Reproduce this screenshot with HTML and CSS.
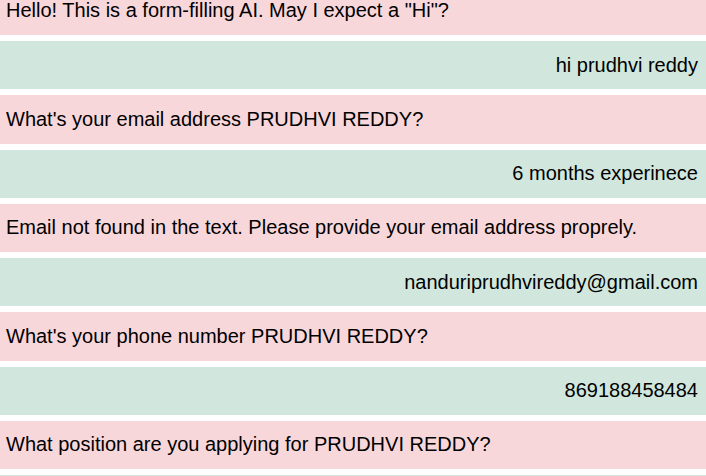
FILE: index.html
```html
<!DOCTYPE html>
<html>
<head>
<meta charset="utf-8">
<link rel="stylesheet" href="styles.css">
</head>
<body>
<div class="chat">
  <div class="msg bot">Hello! This is a form-filling AI. May I expect a "Hi"?</div>
  <div class="msg user">hi prudhvi reddy</div>
  <div class="msg bot">What's your email address PRUDHVI REDDY?</div>
  <div class="msg user">6 months experinece</div>
  <div class="msg bot">Email not found in the text. Please provide your email address proprely.</div>
  <div class="msg user">nanduriprudhvireddy@gmail.com</div>
  <div class="msg bot">What's your phone number PRUDHVI REDDY?</div>
  <div class="msg user">869188458484</div>
  <div class="msg bot">What position are you applying for PRUDHVI REDDY?</div>
  <div class="msg user">&nbsp;</div>
</div>
</body>
</html>
```

FILE: styles.css
```css
html, body {
  margin: 0;
  padding: 0;
  background: #fff;
  overflow: hidden;
}
.chat {
  display: flex;
  flex-direction: column;
  gap: 6px;
  margin-top: -13.29px;
  font-family: "Liberation Sans", Arial, sans-serif;
  font-size: 20px;
  color: #000;
}
.msg {
  padding: 12.65px 8px 12.64px 6px;
  line-height: 23px;
}
.bot {
  background: #f8d7da;
  text-align: left;
}
.user {
  background: #d1e7dd;
  text-align: right;
}
```
